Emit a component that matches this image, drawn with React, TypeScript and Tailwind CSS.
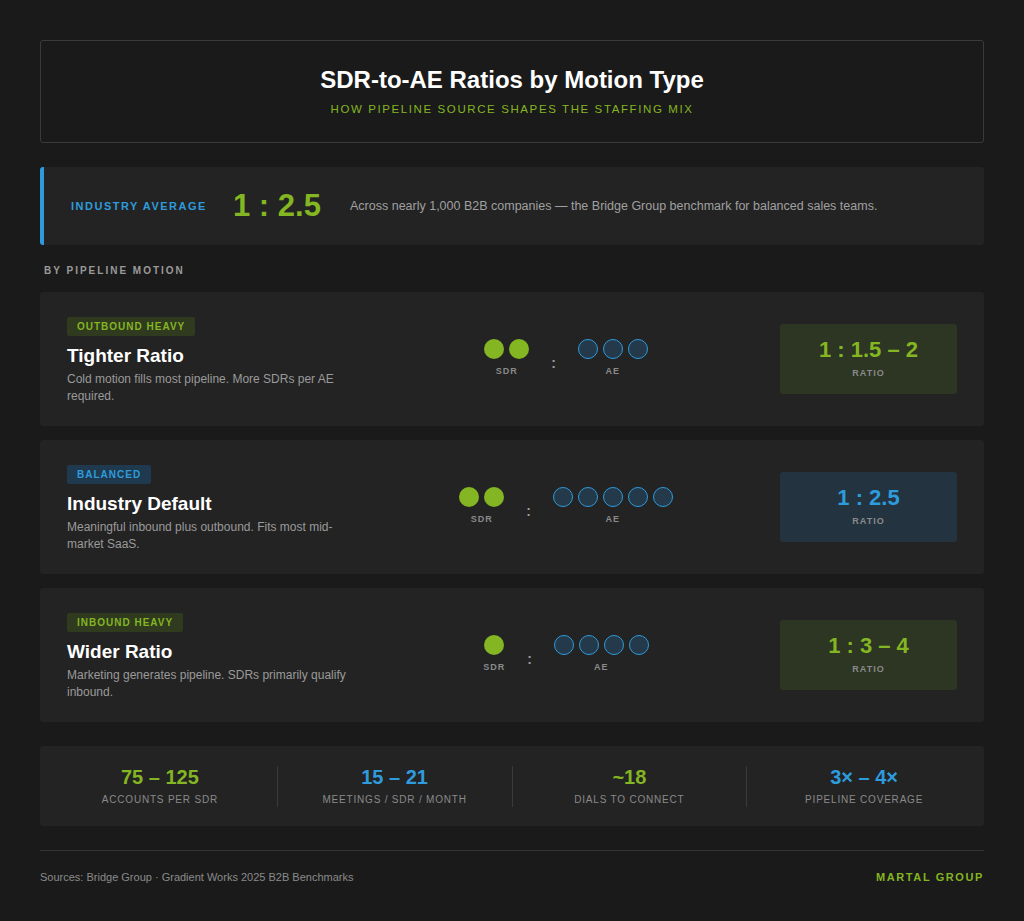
const F = { fontFamily: '"Liberation Sans", Arial, sans-serif' };

function Dots({ n, kind }: { n: number; kind: "sdr" | "ae" }) {
  return (
    <div className="flex flex-col items-center gap-[6px]">
      <div className="flex gap-[5px]">
        {Array.from({ length: n }).map((_, i) =>
          kind === "sdr" ? (
            <div key={i} className="w-[20px] h-[20px] rounded-full bg-[#84b522]" />
          ) : (
            <div key={i} className="w-[20px] h-[20px] rounded-full bg-[#24394a] border border-[#2e9bdc]" />
          )
        )}
      </div>
      <div className="text-[9px] tracking-[1px] text-[#8a8a8a] font-bold">{kind === "sdr" ? "SDR" : "AE"}</div>
    </div>
  );
}

function Card({ tag, title, desc, sdr, ae, ratio, blue }: any) {
  return (
    <div className="h-[134px] bg-[#232323] rounded-[3px] flex items-center px-[27px]">
      <div className="w-[285px] shrink-0">
        <div className={`inline-block px-[10px] py-[2px] text-[10px] font-bold tracking-[1px] rounded-[2px] ${blue ? "bg-[#1f3a4e] text-[#2e9bdc]" : "bg-[#2f3a1f] text-[#84b522]"}`}>{tag}</div>
        <div className="text-white text-[19px] font-bold mt-[6px] leading-[26px]">{title}</div>
        <div className="text-[#9a9a9a] text-[12px] leading-[17px] mt-[2px]">{desc}</div>
      </div>
      <div className="flex-1 flex items-center justify-center gap-[22px]">
        <Dots n={sdr} kind="sdr" />
        <div className="text-[#9a9a9a] font-bold text-[14px] mt-[8px]">:</div>
        <Dots n={ae} kind="ae" />
      </div>
      <div className={`w-[177px] h-[70px] rounded-[3px] flex flex-col items-center justify-center ${blue ? "bg-[#233440]" : "bg-[#2d3622]"}`}>
        <div className={`text-[22px] font-bold leading-[26px] ${blue ? "text-[#2e9bdc]" : "text-[#84b522]"}`}>{ratio}</div>
        <div className="text-[9px] tracking-[1px] text-[#8a8a8a] font-bold mt-[4px]">RATIO</div>
      </div>
    </div>
  );
}

function Stat({ v, l, blue, last }: any) {
  return (
    <div className={`flex-1 flex flex-col items-center justify-center h-[41px] ${last ? "" : "border-r border-[#3a3a3a]"}`}>
      <div className={`text-[20px] font-bold leading-[22px] ${blue ? "text-[#2e9bdc]" : "text-[#84b522]"}`}>{v}</div>
      <div className="text-[10px] tracking-[0.8px] text-[#8a8a8a] mt-[4px]">{l}</div>
    </div>
  );
}

export default function App() {
  return (
    <div style={F} className="w-[1024px] h-[921px] bg-[#1a1a1a] px-[40px] pt-[40px]">
      <div className="h-[103px] border border-[#3a3a3a] rounded-[3px] flex flex-col items-center justify-center">
        <div className="text-white text-[24px] font-bold leading-[28px] mt-[2px]">SDR-to-AE Ratios by Motion Type</div>
        <div className="text-[#84b522] text-[11.5px] tracking-[1.6px] mt-[7px]">HOW PIPELINE SOURCE SHAPES THE STAFFING MIX</div>
      </div>
      <div className="mt-[24px] h-[78px] bg-[#232323] border-l-[4px] border-[#2e9bdc] rounded-[3px] flex items-center pl-[27px]">
        <div className="text-[#2e9bdc] text-[11px] font-bold tracking-[1.5px] w-[162px]">INDUSTRY AVERAGE</div>
        <div className="text-[#84b522] text-[31px] font-bold w-[117px]">1 : 2.5</div>
        <div className="text-[#a0a0a0] text-[12.5px]">Across nearly 1,000 B2B companies — the Bridge Group benchmark for balanced sales teams.</div>
      </div>
      <div className="mt-[20px] ml-[4px] text-[#9a9a9a] text-[10px] font-bold tracking-[2px] leading-[12px]">BY PIPELINE MOTION</div>
      <div className="mt-[15px] flex flex-col gap-[14px]">
        <Card tag="OUTBOUND HEAVY" title="Tighter Ratio" desc="Cold motion fills most pipeline. More SDRs per AE required." sdr={2} ae={3} ratio="1 : 1.5 – 2" />
        <Card tag="BALANCED" blue title="Industry Default" desc="Meaningful inbound plus outbound. Fits most mid-market SaaS." sdr={2} ae={5} ratio="1 : 2.5" />
        <Card tag="INBOUND HEAVY" title="Wider Ratio" desc="Marketing generates pipeline. SDRs primarily qualify inbound." sdr={1} ae={4} ratio="1 : 3 – 4" />
      </div>
      <div className="mt-[24px] h-[80px] bg-[#232323] rounded-[3px] flex items-center px-[3px]">
        <Stat v="75 – 125" l="ACCOUNTS PER SDR" />
        <Stat v="15 – 21" l="MEETINGS / SDR / MONTH" blue />
        <Stat v="~18" l="DIALS TO CONNECT" />
        <Stat v="3× – 4×" l="PIPELINE COVERAGE" blue last />
      </div>
      <div className="mt-[24px] border-t border-[#333] pt-[18px] flex justify-between items-center">
        <div className="text-[#8a8a8a] text-[11px]">Sources: Bridge Group · Gradient Works 2025 B2B Benchmarks</div>
        <div className="text-[#84b522] text-[11px] font-bold tracking-[1.6px]">MARTAL GROUP</div>
      </div>
    </div>
  );
}
